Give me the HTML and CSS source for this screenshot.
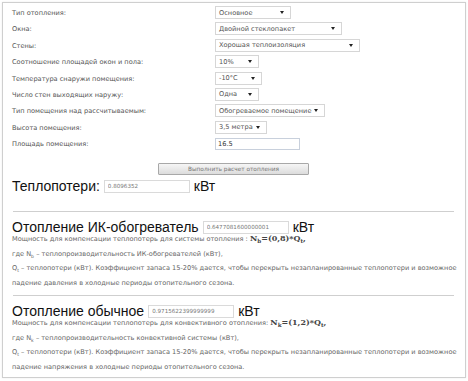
FILE: index.html
```html
<!DOCTYPE html>
<html lang="ru">
<head>
    <meta charset="UTF-8">
    <title>Расчет отопления</title>
    <link rel="stylesheet" href="styles.css">
</head>
<body>
    <div class="calc">
        <div class="form">
            <div class="label">Тип отопления:</div>
            <div><span class="select w76">Основное<i class="arrow"></i></span></div>
            <div class="label">Окна:</div>
            <div><span class="select w127">Двойной стеклопакет<i class="arrow"></i></span></div>
            <div class="label">Стены:</div>
            <div><span class="select w145">Хорошая теплоизоляция<i class="arrow"></i></span></div>
            <div class="label">Соотношение площадей окон и пола:</div>
            <div><span class="select w44">10%<i class="arrow"></i></span></div>
            <div class="label">Температура снаружи помещения:</div>
            <div><span class="select w47">-10°C<i class="arrow"></i></span></div>
            <div class="label">Число стен выходящих наружу:</div>
            <div><span class="select w44">Одна<i class="arrow"></i></span></div>
            <div class="label">Тип помещения над рассчитываемым:</div>
            <div><span class="select w110">Обогреваемое помещение<i class="arrow"></i></span></div>
            <div class="label">Высота помещения:</div>
            <div><span class="select w52">3,5 метра<i class="arrow"></i></span></div>
            <div class="label">Площадь помещения:</div>
            <div><input class="area" type="text" value="16.5"></div>
        </div>

        <div class="actions">
            <button class="btn">Выполнить расчет отопления</button>
        </div>

        <div class="result first">
            Теплопотери: <input class="num" type="text" value="0.8096352"> кВт
        </div>

        <hr class="sep-top">

        <div class="result">
            Отопление ИК-обогреватель <input class="num" type="text" value="0.6477081600000001"> кВт
        </div>
        <p class="note">
            Мощность для компенсации теплопотерь для системы отопления : <b class="f">N<sub>b</sub>=(0,8)*Q<sub>t</sub>,</b><br>
            где N<sub>b</sub> – теплопроизводительность ИК-обогревателей (кВт),<br>
            Q<sub>t</sub> – теплопотери (кВт). Коэффициент запаса 15-20% дается, чтобы перекрыть незапланированные теплопотери и возможное падение давления в холодные периоды отопительного сезона.
        </p>

        <hr class="sep">

        <div class="result">
            Отопление обычное <input class="num" type="text" value="0.9715622399999999"> кВт
        </div>
        <p class="note">
            Мощность для компенсации теплопотерь для конвективного отопления: <b class="f">N<sub>k</sub>=(1,2)*Q<sub>t</sub>,</b><br>
            где N<sub>k</sub> – теплопроизводительность конвективной системы (кВт),<br>
            Q<sub>t</sub> – теплопотери (кВт). Коэффициент запаса 15-20% дается, чтобы перекрыть незапланированные теплопотери и возможное падение напряжения в холодные периоды отопительного сезона.
        </p>
    </div>
</body>
</html>
```
FILE: styles.css
```css
body {
    margin: 0;
    padding: 2px;
    background: #fff;
    font-family: "DejaVu Sans", Verdana, sans-serif;
}
.calc {
    width: 464px;
    height: 376px;
    border: 1px solid #cfcfcf;
    box-shadow: 0 0 2px rgba(0,0,0,0.08);
    padding: 2px 6px 0 9px;
    box-sizing: border-box;
    overflow: hidden;
}
.form {
    display: grid;
    grid-template-columns: 203px 1fr;
    grid-auto-rows: 14px;
    row-gap: 2.4px;
    font-size: 6.6px;
    color: #555;
    margin-top: 1px;
}
.label {
    display: flex;
    align-items: center;
}
.select {
    display: flex;
    align-items: center;
    justify-content: space-between;
    height: 13px;
    box-sizing: border-box;
    border: 1px solid #d6d6d6;
    background: #fff;
    padding: 0 6px 0 3px;
    color: #555;
}
.arrow {
    width: 0;
    height: 0;
    border-left: 2px solid transparent;
    border-right: 2px solid transparent;
    border-top: 3px solid #222;
}
.w44 { width: 44px; }
.w47 { width: 47px; }
.w52 { width: 52px; }
.w76 { width: 76px; }
.w110 { width: 110px; }
.w127 { width: 127px; }
.w145 { width: 145px; }
.area {
    width: 85px;
    height: 12px;
    box-sizing: border-box;
    border: 1px solid #c8d0dc;
    font: 6.6px "DejaVu Sans", sans-serif;
    color: #333;
    padding: 0 2px;
    margin: 1px 0 0;
}
.actions {
    display: flex;
    justify-content: center;
    margin-top: 12px;
    padding-right: 4px;
}
.btn {
    width: 151px;
    height: 12px;
    border: 1px solid #a8a8a8;
    border-radius: 1px;
    background: linear-gradient(#f6f6f6, #dcdcdc);
    font: 5.8px "DejaVu Sans", sans-serif;
    color: #777;
    padding: 0;
}
.result {
    display: flex;
    align-items: center;
    gap: 4px;
    font-family: "Liberation Sans", Arial, sans-serif;
    font-size: 14px;
    color: #111;
    margin-top: 6px;
    height: 17px;
}
.result.first {
    margin-top: 2px;
}
.num {
    width: 86px;
    height: 13px;
    box-sizing: border-box;
    border: 1px solid #dadada;
    font: 5.6px "DejaVu Sans", sans-serif;
    color: #777;
    padding: 0 3px;
    margin: 1px 0 0;
}
hr {
    border: 0;
    border-top: 1px solid #cfcfcf;
    margin: 0 5px 0 1px;
}
.sep-top {
    margin-top: 17px;
}
.sep {
    margin-top: 5px;
}
.note {
    margin: -3px 0 0;
    font-size: 6.6px;
    line-height: 14.5px;
    color: #666;
}
.f {
    font-family: "DejaVu Serif", serif;
    font-size: 8px;
    line-height: 1;
    color: #444;
}
sub {
    font-size: 70%;
    vertical-align: -2px;
    line-height: 0;
}
```
